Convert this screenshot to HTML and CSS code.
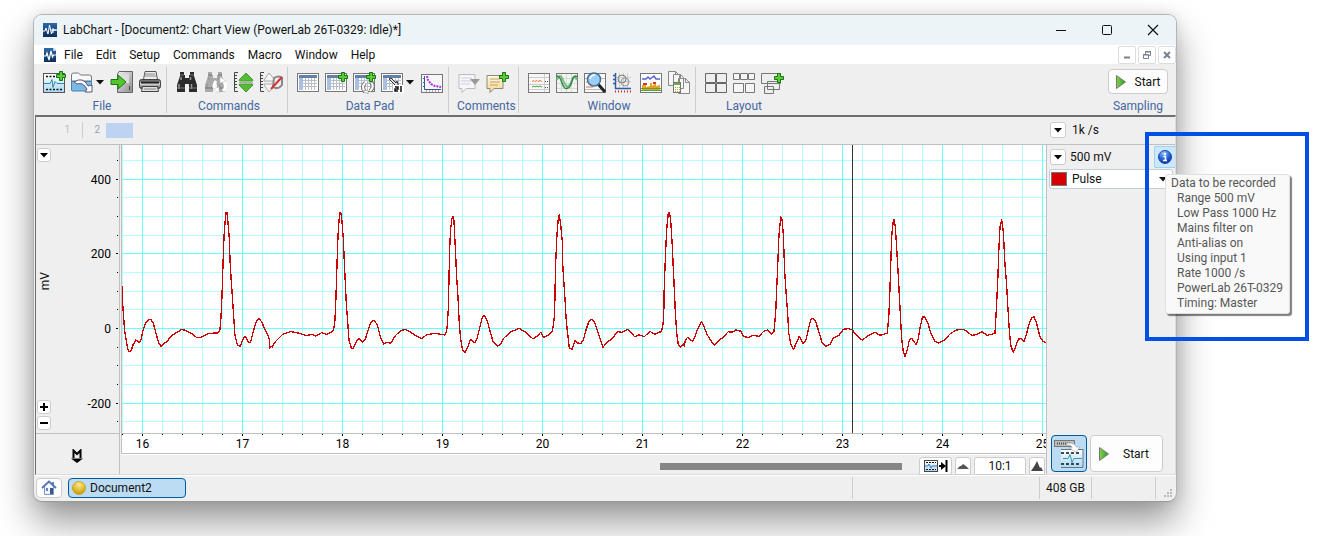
FILE: index.html
```html
<!DOCTYPE html>
<html lang="en">
<head>
  <meta charset="UTF-8">
  <title>LabChart - Document2</title>
  <link rel="stylesheet" href="styles.css">
</head>
<body>
<svg class="defs" width="0" height="0" aria-hidden="true">
  <defs>
    <linearGradient id="sky" x1="0" y1="0" x2="0" y2="1"><stop offset="0" stop-color="#fff"/><stop offset="1" stop-color="#a9d8f7"/></linearGradient>
    <linearGradient id="navy" x1="0" y1="0" x2="0" y2="1"><stop offset="0" stop-color="#2c6aa8"/><stop offset="1" stop-color="#0c2c5c"/></linearGradient>
    <linearGradient id="metal" x1="0" y1="0" x2="1" y2="1"><stop offset="0" stop-color="#f2f2f2"/><stop offset="1" stop-color="#8c8c8c"/></linearGradient>
    <linearGradient id="steel" x1="0" y1="0" x2="0" y2="1"><stop offset="0" stop-color="#555"/><stop offset=".5" stop-color="#ddd"/><stop offset="1" stop-color="#444"/></linearGradient>
    <linearGradient id="note" x1="0" y1="0" x2="0" y2="1"><stop offset="0" stop-color="#fff8e0"/><stop offset="1" stop-color="#fbd488"/></linearGradient>
    <linearGradient id="go" x1="0" y1="0" x2="1" y2="0"><stop offset="0" stop-color="#8ad04a"/><stop offset="1" stop-color="#23a023"/></linearGradient>
    <radialGradient id="gold" cx=".5" cy=".25" r=".8"><stop offset="0" stop-color="#fbe89a"/><stop offset=".5" stop-color="#e3c032"/><stop offset="1" stop-color="#b98f08"/></radialGradient>
    <radialGradient id="blue" cx=".4" cy=".2" r=".8"><stop offset="0" stop-color="#9cc8ff"/><stop offset=".5" stop-color="#2f6fe0"/><stop offset="1" stop-color="#0a2fa0"/></radialGradient>
    <symbol id="plus" viewBox="0 0 10 10">
      <path d="M3.500 .5h3v3h3v3h-3v3h-3v-3h-3v-3h3z" fill="#5ccc35" stroke="#137513"/>
    </symbol>
    <symbol id="table" viewBox="0 0 24 24">
      <rect x="1.500" y="3.500" width="21" height="18" fill="#fff" stroke="#777"/>
      <path d="M3 5h18v3H3z" fill="#6480a8"/><path d="M3 8h4v12H3z" fill="#a9c0e2"/>
      <path d="M7 10.500h14M7 13.500h14M7 16.500h14M9.500 8v12M12.500 8v12M15.500 8v12M18.500 8v12" stroke="#b9bfc6"/>
    </symbol>
    <symbol id="binoculars" viewBox="0 0 24 24">
      <path d="M5 2h4v3h1v3h4V5h1V2h4v4l3 9v7h-8v-8h-4v8H2v-7l3-9z" fill="currentColor"/>
      <path d="M6 7v3M4 14v5M15.500 7v3M16.500 14v5" stroke="#999" stroke-width="1.500"/>
      <path d="M2 18h8M14 18h8M5 5h4M15 5h4" stroke="#777"/>
    </symbol>
    <symbol id="triangle" viewBox="0 0 10 14">
      <path d="M.5 .5L9.500 7L.5 13.500z" fill="url(#go)" stroke="#777"/>
    </symbol>
    <symbol id="strip" viewBox="0 0 24 24">
      <rect x="1.500" y="3.500" width="21" height="19" fill="url(#sky)" stroke="#555"/>
      <path d="M4 6.500h17M4 19.500h17" stroke="#111" stroke-width="1.500" stroke-dasharray="2 1.500"/>
      <path d="M2 13.500h6l2-4l1 8l2-6l2 2h7" fill="none" stroke="#298da3"/>
    </symbol>
    <symbol id="logo" viewBox="0 0 14 14">
      <path d="M0 0h14v14H0z" fill="url(#navy)"/>
      <path d="M0 8h2l1-3l2 6l1.500-9l2 9l1-4h4M10 5v5M8 7h6" fill="none" stroke="#fff"/>
    </symbol>
    <symbol id="down" viewBox="0 0 10 6"><path d="M1 1h8L5 5.500z" fill="currentColor"/></symbol>
  </defs>
</svg>

<div class="stage">
<main class="window">
  <header class="titlebar">
    <svg class="app-icon" viewBox="0 0 14 14"><use href="#logo"/></svg>
    <h1>LabChart - [Document2: Chart View (PowerLab 26T-0329: Idle)*]</h1>
    <div class="caption-buttons">
      <button aria-label="Minimize"><svg width="12" height="12"><path d="M1 6.500h10" stroke="#111"/></svg></button>
      <button aria-label="Maximize"><svg width="12" height="12"><rect x="1.500" y="1.500" width="9" height="9" rx="1" fill="none" stroke="#111"/></svg></button>
      <button aria-label="Close"><svg width="12" height="12"><path d="M1 1l10 10M11 1L1 11" stroke="#111" stroke-width="1.200"/></svg></button>
    </div>
  </header>

  <nav class="menubar">
    <svg class="app-icon" viewBox="0 0 14 14"><path d="M1 0h9l3 3v11H1z" fill="url(#navy)"/><path d="M10 0v3h3z" fill="#b8cee4"/><path d="M0 8h3l1-3l2 7l2-9l1.500 6l1-2H14" fill="none" stroke="#fff" stroke-width="1.200"/></svg>
    <button>File</button>
    <button>Edit</button>
    <button>Setup</button>
    <button>Commands</button>
    <button>Macro</button>
    <button>Window</button>
    <button>Help</button>
    <div class="mdi-buttons">
      <button aria-label="Minimize document"><svg width="10" height="10"><path d="M2 7.500h6" stroke="#76828f" stroke-width="2"/></svg></button>
      <button aria-label="Restore document"><svg width="10" height="10"><path d="M3.500 4V1.500h5v4H6M3 2h6M1.500 4.500h5v4h-5zM1 5h6" fill="none" stroke="#76828f"/></svg></button>
      <button aria-label="Close document"><svg width="10" height="10"><path d="M2 2l6 6M8 2l-6 6" stroke="#76828f" stroke-width="2"/></svg></button>
    </div>
  </nav>

  <div class="toolbar">
    <section class="group">
      <div class="icons">
        <button aria-label="New"><svg viewBox="0 0 24 24"><use href="#strip"/><use href="#plus" x="14" y="1" width="10" height="10"/></svg></button>
        <button aria-label="Open"><svg viewBox="0 0 24 24"><path d="M1.500 20V5q0-2 2-2h5l2 2h9q2 0 2 2v4h-20" fill="#f4f8fb" stroke="#777"/><path d="M1.500 11.500h20V20q0 1-1 1h-18q-1 0-1-1z" fill="#79b9e6" stroke="#4c82ad"/><path d="M4 12q9-6 14 4l4-1v7h-7l2-3q-4-7-10-5z" fill="#fff" stroke="#557"/></svg></button>
        <button class="more" aria-label="Open recent"><svg viewBox="0 0 10 6"><use href="#down"/></svg></button>
        <button aria-label="Save and close"><svg viewBox="0 0 24 24"><path d="M9 1.500h13.500v21H7.500V4z" fill="url(#metal)" stroke="#666"/><path d="M11 4h8v9h-8z" fill="#ddd"/><path d="M19.500 16v4" stroke="#444"/><path d="M1 9.500h7V5l8 7l-8 7v-4.500H1z" fill="#54c629" stroke="#187818"/></svg></button>
        <button aria-label="Print"><svg viewBox="0 0 24 24"><path d="M5.500 9.500L7 1.500h11l1.500 8z" fill="#eee" stroke="#555"/><path d="M7 4h10M7 6h11" stroke="#888"/><rect x="1.500" y="9.500" width="21" height="9" rx="2" fill="url(#steel)" stroke="#444"/><path d="M3 12.500h18" stroke="#222" stroke-width="2"/><path d="M4.500 16.500h15l1 5h-17z" fill="#ddd" stroke="#444"/><path d="M6 19h12" stroke="#888"/></svg></button>
      </div>
      <h2>File</h2>
    </section>
    <section class="group">
      <div class="icons">
        <button aria-label="Find"><svg class="dark" viewBox="0 0 24 24"><use href="#binoculars"/></svg></button>
        <button aria-label="Find next"><svg class="pale" viewBox="0 0 24 24"><use href="#binoculars"/><path d="M13 11q-4 5 0 10M20 21q5-5 0-11" fill="none" stroke="#fff" stroke-width="3"/><path d="M10 19l6-2v6zM23 11l-6 2V7z" fill="#fff" stroke="#bbb" stroke-width=".5"/></svg></button>
        <button aria-label="Set scale"><svg viewBox="0 0 24 24"><path d="M7 2.500H3.500v19H7M4 5.500h2M4 8.500h2M4 11.500h2M4 14.500h2M4 17.500h2" fill="none" stroke="#444"/><path d="M15 3l7 7q0 1-1 1H9q-1 0-1-1zM15 22l7-7q0-1-1-1H9q-1 0-1 1z" fill="#55ba35" stroke="#469a30"/><path d="M8 12.500h14" stroke="#aaa"/></svg></button>
        <button aria-label="Clear scale"><svg viewBox="0 0 24 24"><path d="M5 2.500H1.500v19H5M2 5.500h2M2 8.500h2M2 11.500h2M2 14.500h2M2 17.500h2" fill="none" stroke="#444"/><path d="M10 3l6 7v1H5v-1zM10 22l6-7v-1H5v1z" fill="#f5f5f5" stroke="#aaa"/><path d="M15 8q5-3 8 0v7q-4 5-9 2z" fill="#eee" stroke="#888" stroke-width="2"/><path d="M12 19L23 7" stroke="#d82f2f" stroke-width="2"/></svg></button>
      </div>
      <h2>Commands</h2>
    </section>
    <section class="group">
      <div class="icons">
        <button aria-label="Data pad"><svg viewBox="0 0 24 24"><use href="#table"/></svg></button>
        <button aria-label="Add to data pad"><svg viewBox="0 0 24 24"><use href="#table"/><use href="#plus" x="14" y="2" width="10" height="10"/></svg></button>
        <button aria-label="Multiple add to data pad"><svg viewBox="0 0 24 24"><use href="#table"/><path d="M13 13q-4 4 0 9M18 21q5-4 1-9" fill="none" stroke="#777" stroke-width="4"/><path d="M13 13q-4 4 0 9M18 21q5-4 1-9" fill="none" stroke="#fff" stroke-width="2"/><path d="M11 21l5-1v4zM22 12l-5 1V9z" fill="#fff" stroke="#777" stroke-width=".5"/><use href="#plus" x="14" y="2" width="10" height="10"/></svg></button>
        <button aria-label="Data pad miniwindow"><svg viewBox="0 0 24 24"><use href="#table"/><path d="M9 9l2-1l5 5l1-2l2 6l-6-1l2-1z" fill="#ddd" stroke="#333"/><path d="M13 15h11v8H13z" fill="#fff"/><path d="M15 17h3v2h-3v2h3M21 16v6" fill="none" stroke="#111" stroke-width="1.500"/></svg></button>
        <button class="more" aria-label="More miniwindows"><svg viewBox="0 0 10 6"><use href="#down"/></svg></button>
        <button aria-label="Scatter plot"><svg viewBox="0 0 24 24"><rect x="1.500" y="4.500" width="21" height="18" fill="#f7f7f7" stroke="#777"/><path d="M4.500 6v13.500H21M3 8.500h2M3 12.500h2M3 16.500h2" fill="none" stroke="#2a5da8"/><path d="M7 6l1 4l3 4l4 2l6 1" fill="none" stroke="#b02be0" stroke-width="2" stroke-dasharray="2 1"/><path d="M6 21h15" stroke="#d33" stroke-dasharray="1 2"/></svg></button>
      </div>
      <h2>Data Pad</h2>
    </section>
    <section class="group comments">
      <div class="icons">
        <button aria-label="Comments"><svg viewBox="0 0 24 24"><path d="M2 4.500h16v14H9l-4 4v-4H2z" fill="#f6f6fc" stroke="#bbb"/><path d="M4 8h11M4 11h11M4 14h9" stroke="#cdcdd8"/><path d="M13 9h10l-5 6z" fill="#999"/></svg></button>
        <button aria-label="Add comment"><svg viewBox="0 0 24 24"><path d="M2 5.500h16v13H9l-4 4v-4H2z" fill="url(#note)" stroke="#888"/><path d="M5 9h10M5 12h10M5 15h8" stroke="#b9a274"/><use href="#plus" x="14" y="2" width="10" height="10"/></svg></button>
      </div>
      <h2>Comments</h2>
    </section>
    <section class="group">
      <div class="icons">
        <button aria-label="Chart view"><svg viewBox="0 0 24 24"><rect x="1.500" y="3.500" width="21" height="19" fill="#f8f8f8" stroke="#777"/><path d="M2 7.500h20M2 14.500h20M2 19.500h20M17.500 4v18" stroke="#ccc"/><path d="M5 11.500l2-1l1 1l2-1l1 1l2-1l2 1" fill="none" stroke="#e8753a"/><path d="M5 17l2-1l1 1l2-1l1 1l2-1l2 1" fill="none" stroke="#3fae3f"/><path d="M18 11.500h4M18 17.500h4" stroke="#555" stroke-dasharray="1 1"/></svg></button>
        <button aria-label="Scope view"><svg viewBox="0 0 24 24"><rect x="1.500" y="3.500" width="21" height="19" fill="#f1f5f1" stroke="#777"/><path d="M6.500 4v18M11.500 4v18M16.500 4v18M2 8.500h20M2 13.500h20M2 18.500h20" stroke="#d5ddd5"/><path d="M2 10q3-8 6 0t5 6q2 0 4-6t5 0" fill="none" stroke="#7cba85" stroke-width="2"/><path d="M2 6q3 0 5 7t6 5q2 0 4-7t5-4" fill="none" stroke="#338848" stroke-width="1.500"/></svg></button>
        <button aria-label="Zoom view"><svg viewBox="0 0 24 24"><rect x="1.500" y="3.500" width="21" height="19" fill="#f8f8f8" stroke="#777"/><path d="M2 8.500h20M2 19.500h20" stroke="#bbb"/><path d="M3 12h5M3 17h7" stroke="#e8753a"/><path d="M15 14l7 8" stroke="#222" stroke-width="3"/><circle cx="11" cy="9.500" r="6.500" fill="#9dcdf5" stroke="#44709b" stroke-width="1.500"/><path d="M7 9q1-4 5-4" fill="none" stroke="#fff" stroke-width="1.500"/></svg></button>
        <button aria-label="X-Y view"><svg viewBox="0 0 24 24"><path d="M5 3h17v15H5z" fill="#eef0f2"/><path d="M8.500 3v15M12.500 3v15M16.500 3v15M5 7.500h15M5 11.500h15" stroke="#ccc"/><circle cx="11" cy="9" r="4" fill="none" stroke="#777"/><circle cx="14" cy="12" r="4" fill="none" stroke="#999"/><path d="M4.500 3v15.500H20M2 5.500h2M2 9.500h2M2 13.500h2" fill="none" stroke="#2e5da5" stroke-width="1.500"/><path d="M4 21.500h17" stroke="#c62828" stroke-width="2" stroke-dasharray="1 2"/></svg></button>
        <button aria-label="Spectrum view"><svg viewBox="0 0 24 24"><rect x="1.500" y="3.500" width="21" height="19" fill="#fff" stroke="#777"/><path d="M3 9h4l2-2l2 2l4-3l2 3h4" fill="none" stroke="#5265d8" stroke-width="1.500"/><path d="M3 20v-5l4-1v3l4-1v-3h2v3l4-3v3l4-1v5z" fill="#e5a12e"/><path d="M4 14h4M14 13h3" stroke="#cf3b22" stroke-width="2"/><path d="M2 20.500h20M2 18.500h20" stroke="#52a833"/></svg></button>
        <button aria-label="Notebook"><svg viewBox="0 0 24 24"><path d="M1.500 1.500h7l4 4v10h-11zM6.500 4.500h7l3 3v11h-10zM11.500 8.500h7l4 4v11h-11z" fill="#f6f6f6" stroke="#888"/><path d="M18.500 8.500v4h4M8.500 1.500v3M13.500 4.500v4" fill="none" stroke="#888"/><rect x="6.500" y="12.500" width="7" height="10" fill="#fff" stroke="#777"/><path d="M7 14h6" stroke="#69af3f" stroke-width="2"/><path d="M8 17.500h5M8 19.500h5M8 21.500h5" stroke="#bba13f" stroke-dasharray="1 1"/></svg></button>
      </div>
      <h2>Window</h2>
    </section>
    <section class="group">
      <div class="icons">
        <button aria-label="Tile windows"><svg viewBox="0 0 24 24"><path d="M1.500 3.500h10v9h-10zM12.500 3.500h10v9h-10zM1.500 13.500h10v9h-10zM12.500 13.500h10v9h-10z" fill="#eee" stroke="#666"/></svg></button>
        <button aria-label="Smart tile"><svg viewBox="0 0 24 24"><path d="M1.500 3.500h6v6h-6zM8.500 3.500h7v6h-7zM16.500 3.500h6v6h-6zM1.500 13.500h10v9h-10zM13.500 13.500h9v9h-9z" fill="#f5f5f5" stroke="#777"/></svg></button>
        <button aria-label="New window layout"><svg viewBox="0 0 24 24"><path d="M1.500 3.500h19v10h-19zM7.500 11.500h12v8h-12zM4.500 16.500h9v7h-9z" fill="#eee" stroke="#777"/><use href="#plus" x="14" y="3" width="10" height="10"/></svg></button>
      </div>
      <h2>Layout</h2>
    </section>
    <section class="group sampling">
      <button class="start"><svg viewBox="0 0 10 14"><use href="#triangle"/></svg>Start</button>
      <h2>Sampling</h2>
    </section>
  </div>

  <div class="document">
    <div class="ratebar">
      <span class="block">1</span>
      <span class="block second">2</span>
      <span class="block-fill"></span>
      <div class="rate">
        <button class="drop" aria-label="Sampling rate"><svg viewBox="0 0 10 6"><use href="#down"/></svg></button>
        <span>1k /s</span>
      </div>
    </div>

    <div class="panes">
      <div class="gutter">
        <svg id="yaxis" class="yaxis"></svg>
        <button class="drop small" aria-label="Scale menu"><svg viewBox="0 0 10 6"><use href="#down"/></svg></button>
        <div class="unit">mV</div>
        <div class="scale-buttons">
          <button class="drop small" aria-label="Expand scale"><svg width="10" height="10"><path d="M1 5h8M5 1v8" stroke="#000" stroke-width="2"/></svg></button>
          <button class="drop small" aria-label="Compress scale"><svg width="10" height="10"><path d="M1 5h8" stroke="#000" stroke-width="2"/></svg></button>
        </div>
      </div>
      <svg id="plot" class="plot"></svg>
      <aside class="side">
        <div class="range">
          <button class="drop" aria-label="Range"><svg viewBox="0 0 10 6"><use href="#down"/></svg></button>
          <span>500 mV</span>
          <button class="info" aria-label="Recording info"><svg viewBox="0 0 14 14"><circle cx="7" cy="7" r="6.500" fill="url(#blue)" stroke="#1b47a5"/><circle cx="7" cy="4" r="1.200" fill="#fff"/><path d="M5.500 6.500h2V10M5 10.500h4" fill="none" stroke="#fff" stroke-width="1.500"/></svg></button>
        </div>
        <div class="channel">
          <i class="swatch"></i>
          <select aria-label="Channel"><option>Pulse</option></select>
          <svg viewBox="0 0 10 6"><use href="#down"/></svg>
        </div>
        <div class="highlight"></div>
        <div class="tooltip" role="tooltip">
          <p>Data to be recorded</p>
          <ul>
            <li>Range 500 mV</li>
            <li>Low Pass 1000 Hz</li>
            <li>Mains filter on</li>
            <li>Anti-alias on</li>
            <li>Using input 1</li>
            <li>Rate 1000 /s</li>
            <li>PowerLab 26T-0329</li>
            <li>Timing: Master</li>
          </ul>
        </div>
      </aside>

      <div class="marker">
        <svg width="12" height="14"><path d="M2.500 9V1.500L6 5l3.500-3.500V9" fill="none" stroke="#000" stroke-width="2"/><path d="M0 9.500h12L6 14z" fill="#000"/></svg>
      </div>
      <div class="timeline">
        <svg id="xaxis" class="xaxis"></svg>
        <div class="scroll">
          <div class="track"><div class="thumb"></div></div>
          <button class="wide" aria-label="Scroll to end"><svg width="24" height="12"><rect x=".5" y=".5" width="13" height="11" fill="url(#sky)" stroke="#444"/><path d="M2 2.500h10M2 9.500h10" stroke="#111" stroke-dasharray="2 1"/><path d="M1 6h3l1-2l2 4l1-2h5" fill="none" stroke="#3f78c8"/><path d="M15 6h3M22.500 0v12" stroke="#000" stroke-width="2"/><path d="M17 2l5 4l-5 4z" fill="#000"/></svg></button>
          <button aria-label="Compress time"><svg width="12" height="12"><path d="M0 9l3-3h1l2-2l3 2l3 3z" fill="#555"/></svg></button>
          <button class="ratio">10:1</button>
          <button aria-label="Expand time"><svg width="12" height="12"><path d="M0 11l4-6l2-4l3 7l1-1l2 4z" fill="#444"/></svg></button>
        </div>
      </div>
      <div class="controls">
        <button class="record" aria-label="Record to disk"><svg width="32" height="32"><path d="M8 11h22v19H8z" fill="url(#sky)"/><path d="M8 11.500h22M8 29.500h22V11" fill="none" stroke="#678"/><path d="M8 15h20M8 26h20" stroke="#111" stroke-width="1.500" stroke-dasharray="3 2"/><path d="M10 20.500h5l2-4l2 8l2-4h8" fill="none" stroke="#379aa5"/><rect x="1.500" y="2.500" width="20" height="6" fill="#bbb" stroke="#777"/><path d="M4 5.500h13" stroke="#555" stroke-width="2" stroke-dasharray="1 1"/><path d="M14 5q9 0 9 4h4l-4 5l-7-4h3q0-3-5-3z" fill="#fff" stroke="#999" stroke-width=".5"/></svg></button>
        <button class="start big"><svg viewBox="0 0 10 14"><use href="#triangle"/></svg>Start</button>
      </div>
    </div>
  </div>

  <footer class="status">
    <button class="home" aria-label="Home"><svg width="16" height="16"><path d="M3.500 7v7.500h9V7" fill="#eef4ff" stroke="#7f95bd"/><path d="M11 2h2v4h-2z" fill="#789"/><path d="M1 8l7-6.500L15 8" fill="none" stroke="#5375bd" stroke-width="2"/><path d="M5 8h2v3H5z" fill="#5f83bd"/><path d="M9 8h3v6H9z" fill="#35598f"/></svg></button>
    <button class="doc"><svg width="14" height="14"><circle cx="7" cy="7" r="6.500" fill="url(#gold)" stroke="#c9a63a"/></svg>Document2</button>
    <div class="cell message"></div>
    <div class="cell disk">408 GB</div>
    <div class="cell spare"></div>
    <div class="cell grip"><svg width="9" height="9"><path d="M6 0h2v2H6zM3 3h2v2H3zM6 3h2v2H6zM0 6h2v2H0zM3 6h2v2H3zM6 6h2v2H6z" fill="#bbb"/></svg></div>
  </footer>
</main>
</div>
<script src="chart.js"></script>
</body>
</html>
```
FILE: styles.css
```css
* { box-sizing: border-box; }
html, body { margin: 0; height: 100%; overflow: hidden; background: #fff; }
body, button, select { font-family: Roboto, "Open Sans", sans-serif;
  font-size: 12px; line-height: 16px; color: #111; }
button { margin: 0; padding: 0; border: 0; background: none;
  display: flex; align-items: center; justify-content: center; }
h1, h2, p, ul { margin: 0; padding: 0; font-size: 12px; font-weight: normal; }
svg { display: block; }
.defs { position: absolute; }

.stage { padding: 14px 149px 34px 33px; }
.window { border: 1px solid #b4b4b4; border-bottom-color: #999; border-radius: 9px;
  background: #efefef; box-shadow: 0 20px 36px rgba(0,0,0,0.4), 0 0 14px rgba(0,0,0,0.1); }

.titlebar { display: flex; align-items: center; height: 30px; padding-left: 9px;
  background: #ecf4f8; border-radius: 8px 8px 0 0; }
.app-icon { width: 14px; height: 14px; margin-right: 6px; }
.caption-buttons { display: flex; margin-left: auto; }
.caption-buttons button { width: 46px; height: 30px; }

.menubar { display: flex; align-items: center; gap: 13px; height: 19px;
  padding-left: 9px; background: #fff; }
.menubar .app-icon { margin-right: -6px; }
.mdi-buttons { display: flex; gap: 2px; margin-left: auto; }
.mdi-buttons button { width: 18px; height: 18px; border: 1px solid #ddd;
  border-radius: 2px; background: #fff; }

.toolbar { display: flex; height: 51px; padding: 3px 0 2px; }
.group { padding: 0 4px 0 8px; border-right: 1px solid #ccc; }
.icons { display: flex; gap: 4px; height: 31px; padding-top: 3px; }
.icons button { width: 24px; height: 24px; }
.icons svg { width: 24px; height: 24px; }
.icons .more { width: 12px; margin-left: -4px; }
.icons .more svg { width: 10px; height: 6px; }
.dark { color: #2b2b2b; }
.pale { color: #aaa; }
.group h2 { color: #45669f; text-align: center; }
.group:nth-last-child(-n+2) { border-right: 0; }
.comments { width: 70px; }
.sampling { margin-left: auto; padding-right: 8px; }
.start { gap: 9px; width: 60px; height: 25px; margin: 2px 0 4px;
  border: 1px solid #ccc; border-radius: 4px; background: #fdfdfd; }
.start svg { width: 10px; height: 14px; }

.document { margin-left: 1px; border: 1px solid #dcdcdc; border-width: 2px 1px 1px;
  border-top-color: #6e6e6e; border-left-color: #6e6e6e; }
.ratebar { display: flex; align-items: center; height: 28px; padding-bottom: 1px; border-bottom: 1px solid #c0c0c0; }
.block { width: 47px; padding-right: 12px; border-right: 1px solid #ccc;
  text-align: right; color: #b9bcd6; font-size: 10px; }
.block.second { width: 23px; padding-right: 6px; border: 0; color: #9a9db4; }
.block-fill { width: 27px; height: 15px; background: #bed3f2; }
.rate { display: flex; align-items: center; gap: 6px; width: 125px; margin-left: auto; }
.drop { width: 16px; height: 16px; border: 1px solid #ccc; border-radius: 3px; background: #fff; color: #000; }
.drop svg { width: 10px; height: 6px; }
.drop.small { width: 14px; height: 14px; }
.scale-buttons svg { height: 10px; }

.panes { display: grid; grid-template-columns: 84px minmax(0, 1fr) 129px;
  grid-template-rows: 289px 40px; }
.gutter { position: relative; display: flex; flex-direction: column; justify-content: space-between;
  padding: 3px 1px; border-right: 1px solid #c0c0c0; border-bottom: 1px solid #c0c0c0; }
.yaxis { position: absolute; top: 0; left: 0; width: 83px; height: 288px; }
.yaxis text { text-anchor: end; }
.xaxis text { text-anchor: middle; }
.unit { width: 14px; writing-mode: vertical-rl; transform: rotate(180deg); }
.scale-buttons { display: grid; gap: 2px; }
.plot { width: calc(100% - 1px); height: 289px; margin-left: 1px; border-left: 1px solid #c0c0c0;
  border-bottom: 1px solid #c0c0c0; background: #fff; }
.minor { stroke: #b4ffff; }
.major { stroke: #66ffff; }
.tick { stroke: #000; }
.cursor { stroke: #333; }
.trace { fill: none; stroke: #cc0000; stroke-width: 4; stroke-linejoin: round; shape-rendering: crispEdges; }

.side { position: relative; border-left: 1px solid #c0c0c0; padding: 1px 0 0 2px; }
.range { display: flex; align-items: center; height: 22px; gap: 4px; padding-left: 1px; }
.info { width: 21px; height: 22px; margin-left: auto; border: 1px solid #99d1ff; border-right: 0;
  border-radius: 2px 0 0 2px; background: #cce8ff; }
.info svg { width: 14px; height: 14px; }
.channel { display: flex; align-items: center; width: 124px; height: 20px; margin-top: 1px;
  padding: 0 4px 0 1px; border: 1px solid #c4ccd4; border-radius: 3px; background: #fff; }
.swatch { width: 16px; height: 14px; border: 1px solid #777; background: #d60000; }
.channel select { flex: 1; min-width: 0; padding: 0 5px; border: 0; background: none; appearance: none; }
.channel svg { width: 10px; height: 6px; }
.highlight { position: absolute; top: -13px; right: -134px; width: 164px; height: 209px;
  border: 4px solid #0050e6; }
.tooltip { position: absolute; top: 29px; left: 118px; padding: 1px 6px 2px 5px; white-space: nowrap;
  line-height: 15px; color: #575757; background: #f9f9f9; border: 1px solid #e0e0e0;
  border-radius: 3px; box-shadow: 2px 2px 1px rgba(0,0,0,0.5); }
.tooltip ul { list-style: none; padding-left: 6px; }

.marker { display: flex; align-items: center; justify-content: center; padding: 4px 2px 0 0;
  border-right: 1px solid #c0c0c0; }
.timeline { border-left: 1px solid #efefef; min-width: 0; }
.xaxis { width: 100%; height: 20px; background: #fff; border: 1px solid #c0c0c0; border-width: 0 0 1px 1px; }
.scroll { display: flex; gap: 3px; height: 20px; padding: 2px 1px 0 0; border-top: 1px solid #fff; }
.track { flex: 1; padding: 6px 14px 0 0; }
.thumb { width: 31%; height: 7px; margin-left: auto; background: #868686; }
.scroll button { width: 16px; height: 18px; background: #fff; border: 1px solid #ccc; border-radius: 3px 3px 0 0; }
.scroll .wide { width: 33px; }
.scroll .ratio { width: 52px; }
.controls { display: flex; gap: 3px; padding: 1px 12px 2px 4px; border-left: 1px solid #c0c0c0; }
.record { width: 36px; border: 1px solid #005a9e; border-radius: 4px; background: #bcdcf4; }
.start.big { flex: 1; gap: 14px; height: auto; margin: 0; padding-left: 8px; justify-content: flex-start; }

.status { display: flex; align-items: center; height: 26px; padding: 0 0 2px 2px; border-top: 1px solid #fff; }
.home { width: 26px; height: 20px; margin-right: 6px; border: 1px solid #ccc; border-radius: 4px; background: #fff; }
.doc { width: 118px; height: 20px; justify-content: flex-start; gap: 4px; padding-left: 3px;
  border: 1px solid #005a9e; border-radius: 4px; background: #bcdcf4; }
.cell { height: 22px; padding: 3px 6px; border-left: 1px solid #ccc; }
.message { width: 187px; margin-left: auto; }
.disk { width: 52px; padding-right: 0; white-space: nowrap; }
.spare { width: 64px; }
.grip { width: 21px; padding: 12px 0 0 8px; }
```
FILE: chart.js
```js
const plot = document.getElementById('plot');
const xaxis = document.getElementById('xaxis');
const yaxis = document.getElementById('yaxis');
const ZERO_Y = 183;

// trace recorded in three sweeps, three units to the pixel
const sweeps = [
  [-12, '37,438 38,490 41,535 44,571 48,598 53,628 57,634 63,633 69,615 77,600 83,602 87,609 93,600 98,575 104,556 112,542 122,538 130,550 138,580 146,608 153,619 160,612 172,604 182,590 195,580 206,575 215,568 228,572 247,582 259,592 273,592 285,586 298,580 322,579 330,570 333,530 336,470 339,376 342,290 345,248 348,218 351,218 354,248 358,298 360,360 364,425 368,482 371,530 375,587 382,615 391,619 397,602 404,589 410,596 416,608 422,606 430,574 438,547 446,535 454,544 466,570 475,590 479,598 479,625 483,618 487,621 496,605 506,595 518,583 543,575 560,578 575,582 590,587 605,583 618,588 635,578 650,583 668,575 674,555 677,500 681,376 684,287 687,243 690,218 693,220 696,243 700,298 703,364 706,430 709,490 713,545 717,600 724,624 730,626 738,607 747,595 758,607 767,595 775,568 784,544 793,541 802,555 811,590 821,612 830,607 842,610 857,586 872,572 887,568 900,575'],
  [278, '30,575 45,586 65,596 80,584 105,580 135,585 139,577 142,555 145,505 149,325 152,266 156,235 159,230 162,243 167,345 170,412 174,472 178,553 182,598 188,632 195,638 202,625 211,598 224,608 230,600 238,568 247,532 254,526 262,544 272,580 280,607 293,619 303,610 310,596 330,577 357,565 378,577 399,597 412,588 422,577 431,592 443,587 456,576 461,550 464,520 465,460 467,368 471,283 475,235 478,225 482,253 487,305 488,370 492,433 496,493 499,545 504,590 508,625 516,628 525,602 530,608 542,611 550,600 558,570 568,541 577,538 585,550 595,580 609,622 623,605 637,596 652,575 665,577 683,568 692,577 704,590 717,584 733,590 750,574 764,583 785,574 791,540 793,433 797,335 800,270 805,218 808,218 812,238 817,318 820,385 823,447 826,515 830,577 835,615 842,622 850,612 853,619 856,600 863,592 870,600'],
  [568, '0,600 8,604 15,590 22,570 34,545 42,560 52,585 65,605 74,616 85,603 97,594 115,575 127,577 137,570 153,574 160,588 173,593 190,586 207,589 220,575 232,570 245,583 252,574 257,520 260,450 264,355 267,285 270,255 272,230 276,237 280,285 284,393 288,455 293,520 296,578 303,615 311,629 318,610 328,589 340,611 348,600 358,555 362,540 368,535 377,545 385,570 397,610 408,619 420,613 430,595 447,586 460,568 475,566 487,570 500,586 517,601 530,590 555,577 570,586 592,580 597,520 600,445 603,350 605,290 609,250 612,239 616,260 621,340 625,408 628,465 631,520 635,595 640,635 645,650 652,630 658,600 665,595 678,613 684,600 690,565 697,532 704,529 712,545 723,580 735,604 747,609 762,601 782,580 800,570 822,568 845,586 860,584 876,575 892,586 915,580 920,490 924,405 927,320 930,262 935,239 940,275 945,372 950,435 953,490 958,570 962,615 970,638 977,620 985,598 992,595 1002,604 1010,580 1018,550 1025,533 1032,530 1040,550 1050,590 1060,605 1068,608']
];

function add(svg, name, attrs, text) {
  let el = document.createElementNS('http://www.w3.org/2000/svg', name);
  for (let key in attrs) el.setAttribute(key, attrs[key]);
  if (text) el.textContent = text;
  svg.appendChild(el);
}
function line(svg, cls, x1, y1, x2, y2) {
  add(svg, 'line', {class: cls, x1, y1, x2, y2});
}

// minor lines first so the major ones stay on top
for (let pass of ['minor', 'major']) {
  for (let i = -1; i <= 45; i++) {
    let x = 20.5 + i * 20, major = i % 5 == 0;
    if (major == (pass == 'major')) line(plot, pass, x, 0, x, 288);
  }
  for (let i = -5; i <= 9; i++) {
    let y = Math.round(ZERO_Y - i * 18.65) + 0.5, major = i % 4 == 0;
    if (major == (pass == 'major')) line(plot, pass, 0, y, 3000, y);
  }
}
for (let i = -5; i <= 9; i++) {
  let y = Math.round(ZERO_Y - i * 18.65) + 0.5, major = i % 4 == 0;
  line(yaxis, 'tick', major ? 80 : 81, y, 82, y);
  if (major) add(yaxis, 'text', {x: 75, y: y + 4}, String(i * 50));
}
for (let i = -1; i <= 45; i++) {
  let x = 20.5 + i * 20, major = i % 5 == 0;
  line(xaxis, 'tick', x, 0, x, major ? 2 : 1);
  if (major) add(xaxis, 'text', {x, y: 14}, String(16 + i / 5));
}
for (let [offset, points] of sweeps) {
  add(plot, 'polyline', {class: 'trace', points, transform: `translate(${offset} -5) scale(0.3333)`});
}
line(plot, 'cursor', 730.5, 0, 730.5, 288);
```
